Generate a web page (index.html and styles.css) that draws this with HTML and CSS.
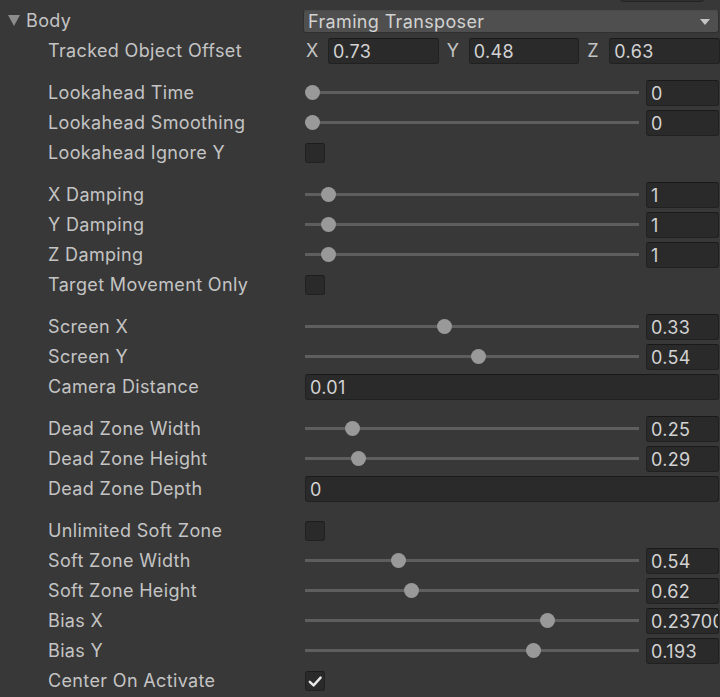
FILE: index.html
```html
<!DOCTYPE html>
<html>
<head>
<meta charset="utf-8">
<link rel="stylesheet" href="styles.css">
</head>
<body>
<div class="inspector">
  <div class="stub"><div class="stub-box"></div></div>

  <div class="row header">
    <div class="foldout"><span class="tri"></span><span class="hlabel">Body</span></div>
    <div class="dropdown"><span>Framing Transposer</span><span class="dd-arrow"></span></div>
  </div>
  <div class="row">
    <div class="label">Tracked Object Offset</div>
    <div class="vec">
      <div class="vgrp"><span class="vl">X</span><div class="field">0.73</div></div>
      <div class="vgrp"><span class="vl">Y</span><div class="field">0.48</div></div>
      <div class="vgrp"><span class="vl">Z</span><div class="field">0.63</div></div>
    </div>
  </div>

  <div class="group">
    <div class="row"><div class="label">Lookahead Time</div>
      <div class="slider"><div class="track"><span class="thumb" style="--p:0"></span></div><div class="field">0</div></div></div>
    <div class="row"><div class="label">Lookahead Smoothing</div>
      <div class="slider"><div class="track"><span class="thumb" style="--p:0"></span></div><div class="field">0</div></div></div>
    <div class="row"><div class="label">Lookahead Ignore Y</div>
      <div class="cell"><span class="check"></span></div></div>
  </div>

  <div class="group">
    <div class="row"><div class="label">X Damping</div>
      <div class="slider"><div class="track"><span class="thumb" style="--p:0.05"></span></div><div class="field">1</div></div></div>
    <div class="row"><div class="label">Y Damping</div>
      <div class="slider"><div class="track"><span class="thumb" style="--p:0.05"></span></div><div class="field">1</div></div></div>
    <div class="row"><div class="label">Z Damping</div>
      <div class="slider"><div class="track"><span class="thumb" style="--p:0.05"></span></div><div class="field">1</div></div></div>
    <div class="row"><div class="label">Target Movement Only</div>
      <div class="cell"><span class="check"></span></div></div>
  </div>

  <div class="group">
    <div class="row"><div class="label">Screen X</div>
      <div class="slider"><div class="track"><span class="thumb" style="--p:0.415"></span></div><div class="field">0.33</div></div></div>
    <div class="row"><div class="label">Screen Y</div>
      <div class="slider"><div class="track"><span class="thumb" style="--p:0.52"></span></div><div class="field">0.54</div></div></div>
    <div class="row"><div class="label">Camera Distance</div>
      <div class="cell"><div class="field wide">0.01</div></div></div>
  </div>

  <div class="group">
    <div class="row"><div class="label">Dead Zone Width</div>
      <div class="slider"><div class="track"><span class="thumb" style="--p:0.125"></span></div><div class="field">0.25</div></div></div>
    <div class="row"><div class="label">Dead Zone Height</div>
      <div class="slider"><div class="track"><span class="thumb" style="--p:0.145"></span></div><div class="field">0.29</div></div></div>
    <div class="row"><div class="label">Dead Zone Depth</div>
      <div class="cell"><div class="field wide">0</div></div></div>
  </div>

  <div class="group">
    <div class="row"><div class="label">Unlimited Soft Zone</div>
      <div class="cell"><span class="check"></span></div></div>
    <div class="row"><div class="label">Soft Zone Width</div>
      <div class="slider"><div class="track"><span class="thumb" style="--p:0.27"></span></div><div class="field">0.54</div></div></div>
    <div class="row"><div class="label">Soft Zone Height</div>
      <div class="slider"><div class="track"><span class="thumb" style="--p:0.31"></span></div><div class="field">0.62</div></div></div>
    <div class="row"><div class="label">Bias X</div>
      <div class="slider"><div class="track"><span class="thumb" style="--p:0.737"></span></div><div class="field">0.23700</div></div></div>
    <div class="row"><div class="label">Bias Y</div>
      <div class="slider"><div class="track"><span class="thumb" style="--p:0.693"></span></div><div class="field">0.193</div></div></div>
    <div class="row"><div class="label">Center On Activate</div>
      <div class="cell"><span class="check on"><svg viewBox="0 0 20 20" width="20" height="20"><path d="M4.8 10.8 L8.6 14.4 L15.6 6.6" fill="none" stroke="#e8e8e8" stroke-width="2.4" stroke-linecap="round" stroke-linejoin="round"/></svg></span></div></div>
  </div>
</div>
</body>
</html>
```

FILE: styles.css
```css
html, body {
  margin: 0;
  padding: 0;
  background: #383838;
}
body {
  width: 720px;
  height: 697px;
  overflow: hidden;
  font-family: Inter, "Noto Sans", sans-serif;
  font-size: 18px;
  letter-spacing: 0.35px;
  color: #c4c4c4;
}
.inspector {
  display: flex;
  flex-direction: column;
}
.stub {
  height: 3px;
  overflow: hidden;
  display: flex;
  justify-content: flex-end;
  align-items: flex-end;
}
.stub-box {
  flex: none;
  width: 82px;
  height: 20px;
  margin-right: 16px;
  margin-bottom: 1px;
  background: #2f2f2f;
  border: 1px solid #242424;
  border-radius: 3px;
}
.row {
  display: grid;
  grid-template-columns: 256px 416px;
  padding-left: 48px;
  height: 30px;
  align-items: center;
}
.row.header {
  margin-top: 2px;
  padding-left: 0;
  grid-template-columns: 303px 417px;
}
.group {
  margin-top: 12px;
}
.label {
  white-space: nowrap;
  line-height: 30px;
  padding-top: 1px;
}
.foldout {
  display: flex;
  align-items: center;
  padding-left: 8px;
}
.tri {
  width: 0;
  height: 0;
  border-left: 6px solid transparent;
  border-right: 6px solid transparent;
  border-top: 11px solid #8c8c8c;
  margin-right: 6px;
  margin-top: 1px;
}
.hlabel {
  color: #c4c4c4;
}
.dropdown {
  align-self: end;
  margin-bottom: 2px;
  height: 23px;
  box-sizing: border-box;
  background: #4f4f4f;
  border: 1px solid #303030;
  border-top-color: #4a4a4a;
  border-radius: 3px;
  display: flex;
  align-items: center;
  justify-content: space-between;
  padding: 0 8px 0 4px;
  color: #d2d2d2;
  margin-right: 1px;
  white-space: nowrap;
}
.dd-arrow {
  width: 0;
  height: 0;
  border-left: 5px solid transparent;
  border-right: 5px solid transparent;
  border-top: 6px solid #c4c4c4;
}
.field {
  height: 26px;
  box-sizing: border-box;
  background: #2a2a2a;
  border: 1px solid #212121;
  border-top-color: #191919;
  border-radius: 3px;
  padding-left: 4px;
  padding-top: 1px;
  color: #d2d2d2;
  line-height: 23px;
  white-space: nowrap;
  overflow: hidden;
}
.field.wide {
  flex: 1;
  margin-left: 1px;
  margin-right: 1px;
}
.vec {
  display: grid;
  grid-template-columns: 1fr 1fr 1fr;
  column-gap: 6px;
}
.vgrp {
  display: grid;
  grid-template-columns: 24px 1fr;
  align-items: center;
}
.vl {
  padding-left: 2px;
  color: #c4c4c4;
}
.slider {
  display: grid;
  grid-template-columns: 1fr 74px;
  column-gap: 7px;
  align-items: center;
  padding-left: 1px;
}
.slider .field {
  margin-right: 1px;
}
.track {
  position: relative;
  height: 3px;
  background: #5e5e5e;
}
.thumb {
  position: absolute;
  top: -6px;
  left: calc(var(--p) * (100% - 15px));
  width: 15px;
  height: 15px;
  border-radius: 50%;
  background: #999999;
}
.cell {
  display: flex;
  align-items: center;
}
.check {
  margin-left: 1px;
  width: 20px;
  height: 20px;
  box-sizing: border-box;
  background: #2a2a2a;
  border: 1px solid #212121;
  border-top-color: #1c1c1c;
  border-radius: 3px;
  display: flex;
  align-items: center;
  justify-content: center;
}
.check svg {
  flex: none;
  margin: -1px;
}
```
